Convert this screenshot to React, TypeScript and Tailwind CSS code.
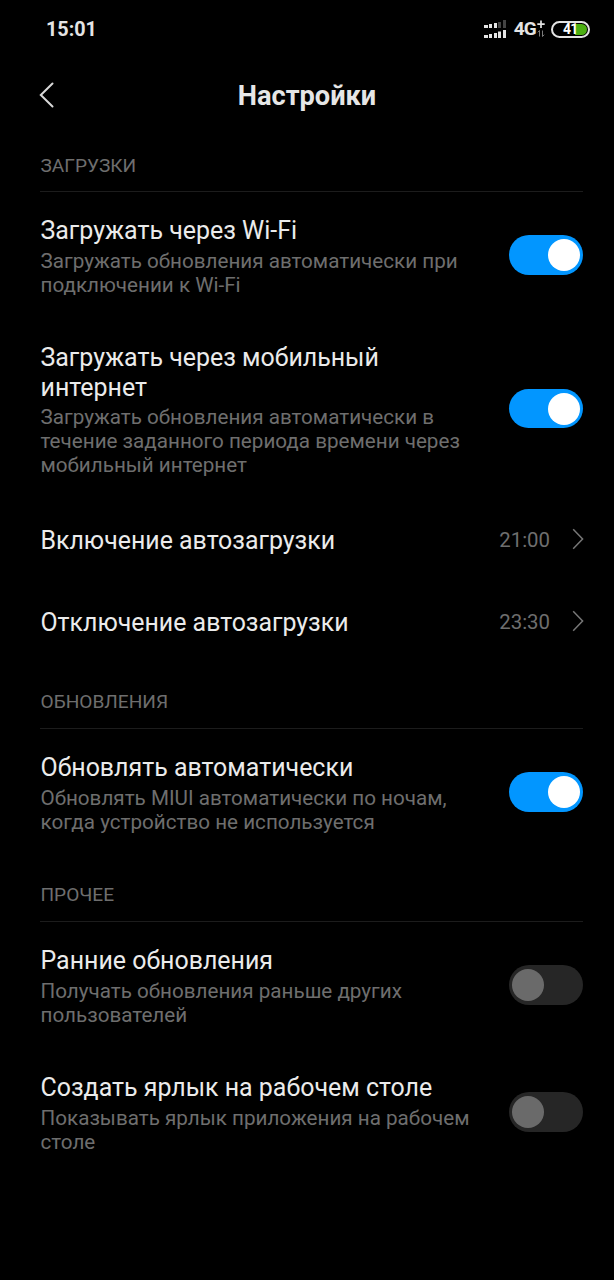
import React, { useState } from 'react';
import clsx from 'clsx';

interface ToggleRowProps {
  title: string[];
  description: string[];
  defaultOn?: boolean;
  className?: string;
}

function Lines({ lines }: { lines: string[] }) {
  return (
    <>
      {lines.map((line) => (
        <span key={line} className="block whitespace-nowrap">
          {line}
        </span>
      ))}
    </>
  );
}

function ToggleRow({ title, description, defaultOn = false, className }: ToggleRowProps) {
  const [on, setOn] = useState(defaultOn);

  return (
    <div className={clsx('flex items-center justify-between', className)}>
      <div className={clsx('flex flex-col pl-[0.5px] pt-px', title.length > 1 ? 'gap-[3px]' : 'gap-1')}>
        <div className="text-[24.95px] leading-[29.5px] text-[#ebebeb]">
          <Lines lines={title} />
        </div>
        <div className="text-[20.65px] leading-6 text-[#6e6e6e]">
          <Lines lines={description} />
        </div>
      </div>
      <button
        type="button"
        role="switch"
        aria-checked={on}
        aria-label={title.join(' ')}
        onClick={() => setOn(!on)}
        className={clsx(
          'relative -top-px flex h-[39.5px] w-[74.5px] shrink-0 items-center rounded-full px-[3.5px]',
          on ? 'justify-end bg-[#0296ff]' : 'justify-start bg-[#262626]'
        )}
      >
        <span className={clsx('size-8 rounded-full', on ? 'bg-white' : 'bg-[#6a6a6a]')} />
      </button>
    </div>
  );
}

function TimeRow({ title, value }: { title: string; value: string }) {
  return (
    <div className="flex h-[82px] items-center pl-[0.5px]">
      <span className="flex-1 pt-0.5 text-[24.9px] text-[#ebebeb]">{title}</span>
      <span className="text-[20.4px] text-[#6e6e6e]">{value}</span>
      <svg viewBox="0 0 12 22" className="-mr-px mb-0.5 ml-[22px] h-[22px] w-3" fill="none" stroke="#777777" strokeWidth="1.5">
        <path d="M1.2 1.2L10.6 11L1.2 20.8" />
      </svg>
    </div>
  );
}

function SectionHeader({ label, className }: { label: string; className?: string }) {
  return (
    <h2 className={clsx('flex items-end border-b border-[#1c1c1c] pl-[0.5px] text-[19.1px] leading-7 text-[#6e6e6e]', className)}>
      {label}
    </h2>
  );
}

// Two SIM signal rows: the top one has weak reception
function SignalIcon() {
  return (
    <svg viewBox="0 0 24 18" className="h-[18px] w-6" fill="#e4e4e4">
      <rect x="1" y="5" width="4" height="3" />
      <rect x="6" y="4" width="3" height="4" />
      <rect x="11" y="3" width="3" height="5" />
      <rect x="15" y="2" width="3" height="6" fill="#444444" />
      <rect x="20" y="0" width="3" height="8" fill="#444444" />
      <rect x="1" y="15" width="4" height="3" />
      <rect x="6" y="14" width="3" height="4" />
      <rect x="11" y="13" width="3" height="5" />
      <rect x="15" y="11.5" width="3" height="6.5" />
      <rect x="20" y="10" width="3" height="8" />
    </svg>
  );
}

function NetworkBadge() {
  return (
    <svg viewBox="0 0 9 18" className="h-[18px] w-[9px]" fill="none">
      <path d="M5 0.5V8M1.3 4.2H8.7" stroke="#e4e4e4" strokeWidth="1.7" />
      <path d="M3.5 16.5V10.5L1.8 12.3M6.5 10.5V16.5L8.2 14.7" stroke="#8a8a8a" strokeWidth="0.9" />
    </svg>
  );
}

function Battery() {
  return (
    <div className="relative flex h-[17px] w-[39px] items-center justify-end rounded-full border-2 border-[#e4e4e4] p-px">
      <div className="h-[11px] w-3 rounded-r-full bg-[#4caf12]" />
      <span className="absolute left-[10px] top-0 text-[14px] font-bold leading-[13px] tracking-[-0.8px] text-white">
        41
      </span>
    </div>
  );
}

function StatusBar() {
  return (
    <div className="flex h-[58px] items-center justify-between pl-[46px] pr-6 text-[#e4e4e4]">
      <span className="pt-0.5 text-[19.8px] font-bold">15:01</span>
      <div className="flex items-center">
        <SignalIcon />
        <span className="ml-[7px] pt-px text-[19px] font-bold tracking-[-0.8px]">4G</span>
        <NetworkBadge />
        <div className="ml-1.5">
          <Battery />
        </div>
      </div>
    </div>
  );
}

export default function App() {
  return (
    <div className="h-[1280px] w-[614px] overflow-hidden bg-black font-[Roboto,sans-serif]">
      <StatusBar />
      <header className="grid h-[74px] grid-cols-[40px_1fr_40px] items-center px-[39px]">
        <button type="button" aria-label="Назад">
          <svg viewBox="0 0 15 26" className="h-[26px] w-[15px]" fill="none" stroke="#d8d8d8" strokeWidth="2" strokeLinecap="round">
            <path d="M13.5 1.5L1.8 13L13.5 24.5" />
          </svg>
        </button>
        <h1 className="pt-0.5 text-center text-[27.2px] font-bold text-[#e6e6e6]">Настройки</h1>
      </header>

      <main className="pl-10 pr-[31px]">
        <SectionHeader label="ЗАГРУЗКИ" className="h-[60px] pb-[11px]" />
        <ToggleRow
          className="h-[128px]"
          title={['Загружать через Wi-Fi']}
          description={['Загружать обновления автоматически при', 'подключении к Wi-Fi']}
          defaultOn
        />
        <ToggleRow
          className="h-[179px]"
          title={['Загружать через мобильный', 'интернет']}
          description={[
            'Загружать обновления автоматически в',
            'течение заданного периода времени через',
            'мобильный интернет',
          ]}
          defaultOn
        />
        <TimeRow title="Включение автозагрузки" value="21:00" />
        <TimeRow title="Отключение автозагрузки" value="23:30" />

        <SectionHeader label="ОБНОВЛЕНИЯ" className="h-[66px] pb-3" />
        <ToggleRow
          className="h-[128px]"
          title={['Обновлять автоматически']}
          description={['Обновлять MIUI автоматически по ночам,', 'когда устройство не используется']}
          defaultOn
        />

        <SectionHeader label="ПРОЧЕЕ" className="h-[65px] pb-3" />
        <ToggleRow
          className="h-[128px]"
          title={['Ранние обновления']}
          description={['Получать обновления раньше других', 'пользователей']}
        />
        <ToggleRow
          className="h-[126px]"
          title={['Создать ярлык на рабочем столе']}
          description={['Показывать ярлык приложения на рабочем', 'столе']}
        />
      </main>
    </div>
  );
}
